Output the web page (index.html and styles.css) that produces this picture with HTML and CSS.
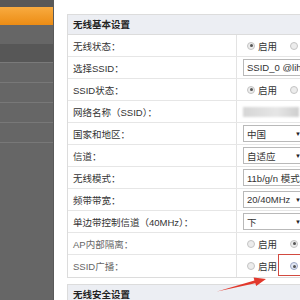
FILE: index.html
```html
<!DOCTYPE html>
<html lang="zh-CN">
<head>
    <meta charset="UTF-8">
    <title>无线设置</title>
    <link rel="stylesheet" href="styles.css">
</head>
<body>
    <div id="page">
        <div id="sidebar">
            <div class="navTop"></div>
            <div class="navItem active"></div>
            <div class="navItem"></div>
            <div class="navItem dark"></div>
            <div class="navItem line"></div>
            <div class="navItem line"></div>
            <div class="navItem line"></div>
            <div class="navItem line"></div>
        </div>
        <div id="main">
            <div class="panel">
                <div class="panelHead">无线基本设置</div>
                <div class="row">
                    <div class="label">无线状态：</div>
                    <div class="field">
                        <span class="radio on"></span><span class="opt">启用</span>
                        <span class="radio"></span><span class="opt">禁用</span>
                    </div>
                </div>
                <div class="row">
                    <div class="label">选择SSID：</div>
                    <div class="field"><div class="input">SSID_0 @lihe</div></div>
                </div>
                <div class="row">
                    <div class="label">SSID状态：</div>
                    <div class="field">
                        <span class="radio on"></span><span class="opt">启用</span>
                        <span class="radio"></span><span class="opt">禁用</span>
                    </div>
                </div>
                <div class="row">
                    <div class="label">网络名称（SSID）：</div>
                    <div class="field"><div class="blurred"></div></div>
                </div>
                <div class="row">
                    <div class="label">国家和地区：</div>
                    <div class="field"><div class="select">中国<span class="caret">▼</span></div></div>
                </div>
                <div class="row">
                    <div class="label">信道：</div>
                    <div class="field"><div class="select">自适应<span class="caret">▼</span></div></div>
                </div>
                <div class="row">
                    <div class="label">无线模式：</div>
                    <div class="field"><div class="select">11b/g/n 模式</div></div>
                </div>
                <div class="row">
                    <div class="label">频带带宽：</div>
                    <div class="field"><div class="select">20/40MHz<span class="caret">▼</span></div></div>
                </div>
                <div class="row">
                    <div class="label">单边带控制信道（40MHz）：</div>
                    <div class="field"><div class="select">下<span class="caret">▼</span></div></div>
                </div>
                <div class="row">
                    <div class="label light">AP内部隔离：</div>
                    <div class="field">
                        <span class="radio"></span><span class="opt">启用</span>
                        <span class="radio on"></span><span class="opt">禁用</span>
                    </div>
                </div>
                <div class="row last">
                    <div class="label light">SSID广播：</div>
                    <div class="field">
                        <span class="radio"></span><span class="opt">启用</span>
                        <span class="radio on focus"></span><span class="opt">禁用</span>
                    </div>
                </div>
            </div>
            <div class="panel">
                <div class="panelHead">无线安全设置</div>
            </div>
        </div>
    </div>
    <div class="markBox"></div>
    <svg class="arrow" width="300" height="300" viewBox="0 0 300 300">
        <polygon points="217,291.5 254.4,280.4 253.6,277.4 266,279 256.2,285.9 255.3,283.2" fill="#e2382c"/>
    </svg>
</body>
</html>
```

FILE: styles.css
```css
* {
    margin: 0;
    padding: 0;
    box-sizing: border-box;
}
body {
    width: 300px;
    height: 300px;
    overflow: hidden;
    background-color: #ffffff;
    color: #333333;
    font-family: "Liberation Sans", "Noto Sans CJK SC", sans-serif;
    font-size: 9.5px;
}
#page {
    display: flex;
    height: 300px;
}
#sidebar {
    width: 54px;
    flex-shrink: 0;
    background-color: #666666;
    border-right: 1px solid #5a5a5a;
}
.navTop {
    height: 7px;
    background-color: #585858;
}
.navItem {
    height: 19px;
}
.navItem.active {
    height: 18px;
    background: linear-gradient(#f8ab40, #ec8c14);
}
.navItem.dark {
    height: 19px;
    background-color: #575757;
    border-bottom: 1px solid #7a7a7a;
}
.navItem.line {
    height: 20px;
    border-bottom: 1px solid #787878;
}
#main {
    flex: 1;
    padding: 14px 0 0 13px;
    display: flex;
    flex-direction: column;
    gap: 6px;
    min-width: 0;
}
.panel {
    width: 260px;
    border: 1px solid #dcdcdc;
    border-right: none;
}
.panelHead {
    height: 20px;
    line-height: 20px;
    padding-left: 5px;
    background-color: #eceef3;
    border-bottom: 1px solid #dcdcdc;
    font-weight: bold;
    font-size: 9.5px;
    color: #222222;
}
.row {
    display: grid;
    grid-template-columns: 169px 1fr;
    height: 22px;
    border-bottom: 1px solid #e6e6e6;
}
.row.last {
    border-bottom: none;
}
.label {
    padding-left: 5px;
    display: flex;
    align-items: center;
    border-right: 1px solid #e3e3e3;
    white-space: nowrap;
    overflow: hidden;
}
.label.light {
    color: #666666;
}
.field {
    display: flex;
    align-items: center;
    padding-left: 6px;
    white-space: nowrap;
    overflow: hidden;
}
.radio {
    width: 8px;
    height: 8px;
    border-radius: 50%;
    border: 1px solid #c4c4c4;
    background-color: #ececec;
    margin-left: 4px;
    margin-right: 3px;
    position: relative;
    flex-shrink: 0;
}
.radio.on::after {
    content: "";
    position: absolute;
    left: 1.5px;
    top: 1.5px;
    width: 3px;
    height: 3px;
    border-radius: 50%;
    background-color: #555555;
}
.radio.focus {
    background-color: #e3e8f4;
    border-color: #9aa6c4;
}
.opt {
    margin-right: 9px;
    color: #333333;
}
.input, .select {
    width: 58px;
    height: 17px;
    border: 1px solid #b9b9b9;
    display: flex;
    align-items: center;
    padding-left: 3px;
    overflow: hidden;
    background-color: #ffffff;
}
.select {
    position: relative;
}
.caret {
    position: absolute;
    left: 51px;
    font-size: 6px;
    color: #222222;
}
.blurred {
    width: 56px;
    height: 10px;
    background: linear-gradient(90deg, #d6d6d6, #e6e6e6 60%, #cfcfcf);
    filter: blur(1px);
}
.markBox {
    position: absolute;
    left: 278px;
    top: 254px;
    width: 26px;
    height: 22px;
    border: 1px solid #d24a40;
}
.arrow {
    position: absolute;
    left: 0;
    top: 0;
}
```
